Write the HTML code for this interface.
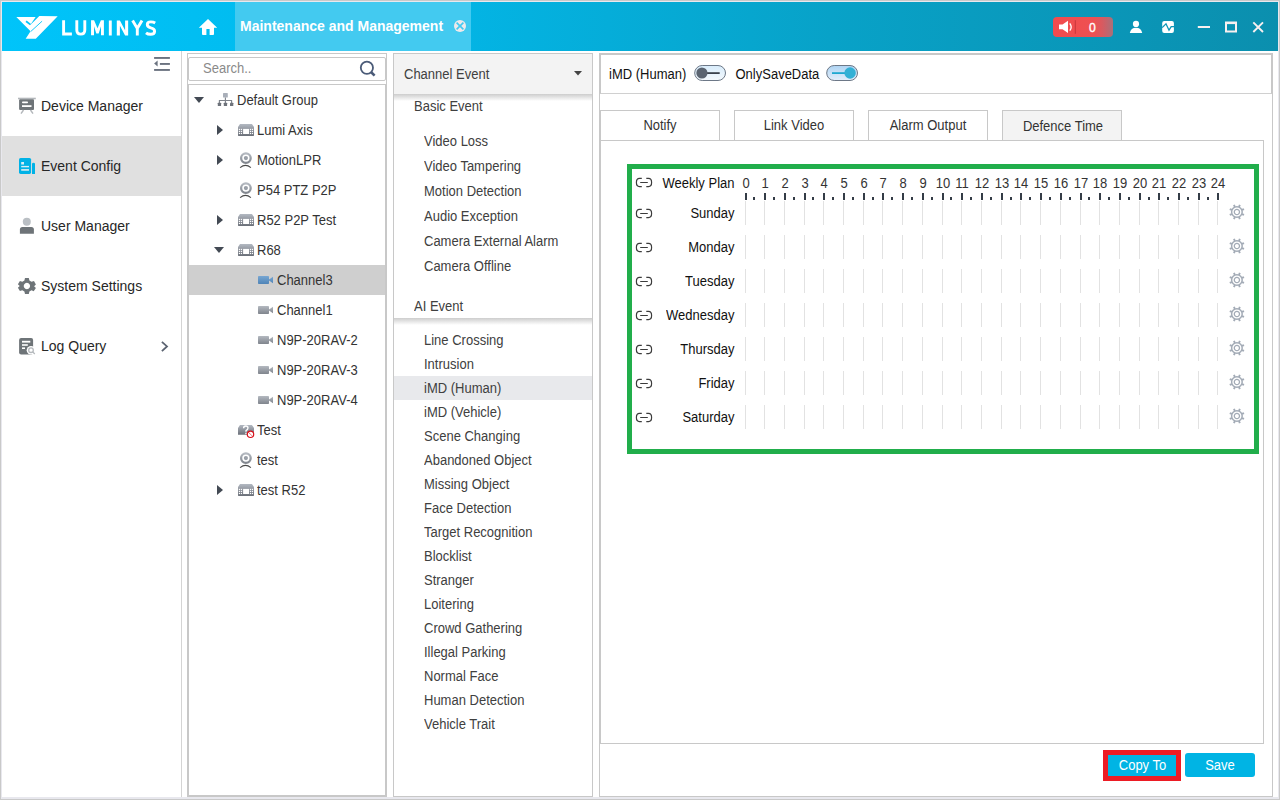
<!DOCTYPE html>
<html><head><meta charset="utf-8">
<style>
*{box-sizing:border-box;margin:0;padding:0}
html,body{width:1280px;height:800px;overflow:hidden;background:#c9c9c9}
body{position:relative;font-family:"Liberation Sans",sans-serif;color:#333;font-size:13px}
.a{position:absolute}
.t{position:absolute;white-space:nowrap;line-height:1;transform:scaleY(1.08);transform-origin:0 2.2px}
#f1{left:1px;top:1px;width:1278px;height:798px;background:#e8e8ee}
#f2{left:2px;top:2px;width:1276px;height:795px;background:#fff}
#hdr{left:2px;top:2px;width:1276px;height:49px;background:linear-gradient(to right,#00c4fa 0%,#02b8ea 30%,#08a2c8 65%,#0b8fae 100%)}
#tab{left:235px;top:2px;width:236px;height:49px;background:#43caf0}
.ttl{color:#fff;font-weight:bold;font-size:14px;transform:none}
#side{left:2px;top:51px;width:180px;height:746px;border-right:1px solid #d4d4d4;background:#fff}
.sitem{position:absolute;left:0;width:179px;height:60px}
.sitem .t{left:39px;top:23px;font-size:14px;color:#272727;transform:none}
.panel{position:absolute;top:53px;height:744px;border:1px solid #c8c8c8;background:#fff}
.tr .t{font-size:13px;color:#333}
.ev .t{font-size:13px;color:#333}
</style></head><body>
<div class="a" id="f1"></div>
<div class="a" id="f2"></div>
<div class="a" id="hdr"></div>
<div class="a" id="tab"></div>
<div class="t ttl" style="left:240px;top:19px">Maintenance and Management</div>
<svg class="a" style="left:0;top:0" width="480" height="51" viewBox="0 0 480 51">
  <polygon fill="#fff" points="16.3,16.88 35.63,16.88 30.3,25 39.34,16.1 57.7,16.3 35.8,38.76 25.67,38.76 30.55,31.34"/>
  <line x1="26.06" y1="21.18" x2="30.5" y2="24.6" stroke="#00c4fa" stroke-width="1.8"/>
  <line x1="42.08" y1="21.18" x2="30.75" y2="31.5" stroke="#00c4fa" stroke-width="0.9"/>
  <polygon fill="#fff" points="91.05,20.3 94.1,20.3 97.5,28.3 100.9,20.3 103.9,20.3 103.9,35.3 101,35.3 101,26.2 98.7,33.6 96.3,33.6 94,26.2 94,35.3 91.05,35.3"/>
  <polygon fill="#fff" points="116.8,20.4 119.9,20.4 125.1,30.2 125.1,20.4 128.15,20.4 128.15,35.6 125.1,35.6 119.9,25.8 119.9,35.6 116.8,35.6"/>
  <path fill="none" stroke="#fff" stroke-width="2.9" stroke-linejoin="miter" d="M63.6,20.3 V33.95 H71.9 M76.8,20.3 V30 Q76.8,34.1 80.8,34.1 Q84.8,34.1 84.8,30 V20.3 M110.3,20.4 V35.6 M132.6,20.4 L137.3,28.4 L142,20.4 M137.3,28 V35.6 M155.2,22.9 Q153.5,21.9 150.8,21.9 Q147.3,21.9 147.3,24.6 Q147.3,27.1 150.8,27.8 Q154.6,28.6 154.6,31.2 Q154.6,34.3 150.6,34.3 Q147.8,34.3 146,32.8"/>
  <path fill="#fff" d="M208,19 L217.2,27.8 L214,27.8 L214,34 Q214,34.9 213.1,34.9 L209.6,34.9 L209.6,29 L206.4,29 L206.4,34.9 L202.9,34.9 Q202,34.9 202,34 L202,27.8 L198.8,27.8 Z"/>
  <circle cx="460" cy="26" r="6" fill="#efe9eb"/>
  <path d="M456.6,22.6 L463.4,29.4 M463.4,22.6 L456.6,29.4" stroke="#43caf0" stroke-width="1.6"/>
</svg>
<div class="a" style="left:1053px;top:17px;width:60px;height:20px;border-radius:4px;background:linear-gradient(to right,#f24b4e 0%,#ee5052 68%,#d85a60 82%,#a8707a 100%)"></div>
<svg class="a" style="left:1040px;top:0" width="240" height="51" viewBox="1040 0 240 51">
  <path fill="#fff" d="M1059,24.5 L1062.5,24.5 L1068,20.8 L1068,33 L1062.5,29.3 L1059,29.3 Z"/>
  <path d="M1069.8,23.3 Q1072.6,27 1069.8,30.7" stroke="#fff" stroke-width="1.3" fill="none"/>
  <line x1="1075.3" y1="20.2" x2="1075.3" y2="33.8" stroke="#c8363a" stroke-width="1"/>
  <text x="1089.1" y="32" fill="#fff" font-family="Liberation Sans" font-size="12.2" stroke="#fff" stroke-width="0.35">0</text>
  <circle cx="1136" cy="23.9" r="3.1" fill="#fff"/>
  <path fill="#fff" d="M1129.8,33 Q1130.8,27.8 1136,27.8 Q1141.2,27.8 1142.2,33 Z"/>
  <rect x="1162.2" y="21" width="11.7" height="12" rx="2" fill="#fff"/>
  <polyline points="1162.2,27.6 1166,23.8 1169,30.2 1171.2,26.6 1174,26.6" fill="none" stroke="#0b97b8" stroke-width="1.3"/>
  <rect x="1197.8" y="26" width="12.2" height="2" fill="#f8f0f0"/>
  <path fill="none" stroke="#f8f0f0" stroke-width="2" d="M1226,23 L1236,23 L1236,31.4 L1226,31.4 Z"/>
  <rect x="1225" y="21.5" width="12" height="2.6" fill="#f8f0f0"/>
  <path d="M1253.3,22.3 L1263,32 M1263,22.3 L1253.3,32" stroke="#f8f0f0" stroke-width="1.9"/>
</svg>

<div class="a" id="side">
  <div class="sitem" style="top:25px"><div class="t">Device Manager</div></div>
  <div class="sitem" style="top:85px;background:#e0e0e0"><div class="t">Event Config</div></div>
  <div class="sitem" style="top:145px"><div class="t">User Manager</div></div>
  <div class="sitem" style="top:205px"><div class="t">System Settings</div></div>
  <div class="sitem" style="top:265px"><div class="t">Log Query</div></div>
</div>

<svg class="a" style="left:0;top:51px" width="182" height="320" viewBox="0 51 182 320">
  <rect x="154.1" y="57" width="15.8" height="1.9" fill="#6b7380"/>
  <rect x="159.9" y="63" width="10" height="1.9" fill="#6b7380"/>
  <rect x="154.1" y="69" width="15.8" height="1.9" fill="#6b7380"/>
  <polygon points="157.6,60.6 157.6,66.6 154.1,63.6" fill="#6b7380"/>
  <!-- device manager -->
  <rect x="18" y="97.7" width="17.8" height="1.6" fill="#b3b7bb"/>
  <rect x="19.1" y="99.3" width="14.9" height="10.6" rx="1" fill="#6e7478"/>
  <rect x="22" y="101.6" width="6" height="1.6" rx="0.8" fill="#fff"/>
  <rect x="22" y="105.2" width="9.5" height="1.8" fill="#fff"/>
  <path d="M23.5,110 L21,113.6 M30.5,110 L33,113.6" stroke="#b3b7bb" stroke-width="1.4"/>
  <!-- event config -->
  <rect x="19" y="157.9" width="12.1" height="16" rx="1.6" fill="#00b2e6"/>
  <path d="M32,174 L32,164 Q32,162.7 33.5,162.7 Q35,162.7 35,164 L35,174 Z" fill="#00b2e6"/>
  <rect x="21.2" y="162" width="2.8" height="2.5" fill="#d8eef5"/>
  <rect x="21.2" y="165.9" width="7.8" height="1.4" fill="#d8eef5"/>
  <rect x="21.2" y="169" width="7.8" height="1.8" fill="#c8e6ef"/>
  <!-- user manager -->
  <circle cx="26.8" cy="221.7" r="4" fill="#babfc4"/>
  <path d="M19.9,233.8 L19.9,229.5 Q19.9,227 22.4,227 L31.4,227 Q33.9,227 33.9,229.5 L33.9,233.8 Z" fill="#6e7478"/>
  <!-- settings gear -->
  <g transform="translate(26.9,286)" fill="#6e7478">
    <path fill-rule="evenodd" d="M-1.9,-8 L1.9,-8 L2.5,-5.4 L4.6,-4.2 L7.1,-5 L7.6,-4 L9,-1.6 L7.2,0.3 L7.2,-0.3 L7.2,0.3 L9,2 L7.3,4.6 L6.8,5.2 L4.6,4.2 L2.5,5.4 L1.9,8 L-1.9,8 L-2.5,5.4 L-4.6,4.2 L-7,5 L-9,1.8 L-7.2,0 L-9,-1.8 L-7,-5 L-4.6,-4.2 L-2.5,-5.4 Z M0,-3.2 A3.2,3.2 0 1,0 0.01,-3.2 Z"/>
  </g>
  <!-- log query -->
  <rect x="19.1" y="337.9" width="14" height="16.5" rx="2" fill="#6e7478"/>
  <rect x="22" y="340.8" width="8.3" height="1.8" fill="#fff"/>
  <rect x="22" y="344.2" width="5.8" height="1.6" fill="#fff"/>
  <rect x="22" y="347.4" width="3" height="1.6" fill="#fff"/>
  <circle cx="31" cy="350.2" r="4.3" fill="#fff"/>
  <circle cx="31" cy="350.2" r="2.3" fill="none" stroke="#b5b9bd" stroke-width="1.3"/>
  <line x1="32.6" y1="351.8" x2="34.8" y2="354" stroke="#b5b9bd" stroke-width="1.3"/>
  <polyline points="161.9,341.8 167,346.4 161.9,351.1" fill="none" stroke="#5b6371" stroke-width="1.8"/>
</svg>
<div class="panel" style="left:187px;width:200px">
  <div class="a" style="left:0;top:3px;width:198px;height:24px;border:1px solid #c8c8c8;border-radius:2px"></div>
  <div class="t" style="left:15px;top:6.8px;font-size:13px;color:#8a8a8a">Search..</div>
  <div class="a" style="left:0;top:30px;width:198px;height:712px;border:1px solid #c8c8c8"></div>
  <div class="a" style="left:1px;top:211px;width:196px;height:30px;background:#cfcfcf"></div>
</div>
<svg class="a" style="left:187px;top:53px" width="200" height="460" viewBox="187 53 200 460">
  <defs>
    <linearGradient id="gg" x1="0" y1="0" x2="0" y2="1"><stop offset="0" stop-color="#b4b9c0"/><stop offset="1" stop-color="#80858d"/></linearGradient>
    <linearGradient id="gd" x1="0" y1="0" x2="0" y2="1"><stop offset="0" stop-color="#b3b9c2"/><stop offset="0.35" stop-color="#9a9fa8"/><stop offset="1" stop-color="#6b7079"/></linearGradient>
    <linearGradient id="gb" x1="0" y1="0" x2="0" y2="1"><stop offset="0" stop-color="#77a6d2"/><stop offset="1" stop-color="#4f84b7"/></linearGradient>
  </defs>
  <circle cx="366.9" cy="67.8" r="6.1" fill="none" stroke="#4b5b78" stroke-width="1.8"/>
  <line x1="371" y1="72" x2="374.6" y2="75.6" stroke="#4b5b78" stroke-width="2.6"/>
  <polygon points="194,97 204,97 199,103" fill="#434a54"/>
  <rect x="223" y="93" width="4.8" height="4.6" rx="0.6" fill="#a9afb9"/>
  <path d="M225.4,97.5 V103 M219.4,103 V100.5 H231.6 V103" stroke="#7d828a" stroke-width="1.1" fill="none"/>
  <rect x="217.8" y="102.8" width="3.3" height="3.3" rx="0.4" fill="#6e737b"/>
  <rect x="223.8" y="102.8" width="3.3" height="3.3" rx="0.4" fill="#6e737b"/>
  <rect x="230" y="102.8" width="3.3" height="3.3" rx="0.4" fill="#6e737b"/>
<polygon points="217,125 223,130 217,135" fill="#434a54"/>
  <path d="M240.0,124.0 L251.9,124.0 L254.0,127.0 L254.0,135.3 Q254.0,135.9 253.4,135.9 L238.6,135.9 Q238.0,135.9 238.0,135.3 L238.0,127.0 Z" fill="url(#gd)"/>
  <rect x="243.1" y="128.9" width="5.9" height="5.1" fill="#fff"/>
  <g fill="#fff"><rect x="238.85" y="128.85" width="1.2" height="1.2"/><rect x="238.85" y="130.85" width="1.2" height="1.2"/><rect x="238.85" y="132.90" width="1.2" height="1.2"/><rect x="240.85" y="128.85" width="1.2" height="1.2"/><rect x="240.85" y="130.85" width="1.2" height="1.2"/><rect x="240.85" y="132.90" width="1.2" height="1.2"/><rect x="249.85" y="128.85" width="1.2" height="1.2"/><rect x="249.85" y="130.85" width="1.2" height="1.2"/><rect x="249.85" y="132.90" width="1.2" height="1.2"/><rect x="251.85" y="128.85" width="1.2" height="1.2"/><rect x="251.85" y="130.85" width="1.2" height="1.2"/><rect x="251.85" y="132.90" width="1.2" height="1.2"/></g>
  <polygon points="217,155 223,160 217,165" fill="#434a54"/>
  <circle cx="245.9" cy="158.1" r="4.8" fill="none" stroke="url(#gg)" stroke-width="2.3"/>
  <circle cx="245.9" cy="158.1" r="2.1" fill="#9aa0a8"/>
  <path d="M240.1,167.6 Q245.5,163.2 250.9,167.6" fill="none" stroke="#4a4a4a" stroke-width="1.1"/>
  <circle cx="245.9" cy="188.1" r="4.8" fill="none" stroke="url(#gg)" stroke-width="2.3"/>
  <circle cx="245.9" cy="188.1" r="2.1" fill="#9aa0a8"/>
  <path d="M240.1,197.6 Q245.5,193.2 250.9,197.6" fill="none" stroke="#4a4a4a" stroke-width="1.1"/>
  <polygon points="217,215 223,220 217,225" fill="#434a54"/>
  <path d="M240.0,214.0 L251.9,214.0 L254.0,217.0 L254.0,225.3 Q254.0,225.9 253.4,225.9 L238.6,225.9 Q238.0,225.9 238.0,225.3 L238.0,217.0 Z" fill="url(#gd)"/>
  <rect x="243.1" y="218.9" width="5.9" height="5.1" fill="#fff"/>
  <g fill="#fff"><rect x="238.85" y="218.85" width="1.2" height="1.2"/><rect x="238.85" y="220.85" width="1.2" height="1.2"/><rect x="238.85" y="222.90" width="1.2" height="1.2"/><rect x="240.85" y="218.85" width="1.2" height="1.2"/><rect x="240.85" y="220.85" width="1.2" height="1.2"/><rect x="240.85" y="222.90" width="1.2" height="1.2"/><rect x="249.85" y="218.85" width="1.2" height="1.2"/><rect x="249.85" y="220.85" width="1.2" height="1.2"/><rect x="249.85" y="222.90" width="1.2" height="1.2"/><rect x="251.85" y="218.85" width="1.2" height="1.2"/><rect x="251.85" y="220.85" width="1.2" height="1.2"/><rect x="251.85" y="222.90" width="1.2" height="1.2"/></g>
  <polygon points="214,247 224,247 219,253" fill="#434a54"/>
  <path d="M240.0,244.0 L251.9,244.0 L254.0,247.0 L254.0,255.3 Q254.0,255.9 253.4,255.9 L238.6,255.9 Q238.0,255.9 238.0,255.3 L238.0,247.0 Z" fill="url(#gd)"/>
  <rect x="243.1" y="248.9" width="5.9" height="5.1" fill="#fff"/>
  <g fill="#fff"><rect x="238.85" y="248.85" width="1.2" height="1.2"/><rect x="238.85" y="250.85" width="1.2" height="1.2"/><rect x="238.85" y="252.90" width="1.2" height="1.2"/><rect x="240.85" y="248.85" width="1.2" height="1.2"/><rect x="240.85" y="250.85" width="1.2" height="1.2"/><rect x="240.85" y="252.90" width="1.2" height="1.2"/><rect x="249.85" y="248.85" width="1.2" height="1.2"/><rect x="249.85" y="250.85" width="1.2" height="1.2"/><rect x="249.85" y="252.90" width="1.2" height="1.2"/><rect x="251.85" y="248.85" width="1.2" height="1.2"/><rect x="251.85" y="250.85" width="1.2" height="1.2"/><rect x="251.85" y="252.90" width="1.2" height="1.2"/></g>
  <rect x="258" y="276" width="11" height="8" rx="0.8" fill="url(#gb)"/>
  <polygon points="269,279.4 273,276.7 273,283.3 269,280.6" fill="url(#gb)"/>
  <rect x="258" y="306" width="11" height="8" rx="0.8" fill="url(#gg)"/>
  <polygon points="269,309.4 273,306.7 273,313.3 269,310.6" fill="url(#gg)"/>
  <rect x="258" y="336" width="11" height="8" rx="0.8" fill="url(#gg)"/>
  <polygon points="269,339.4 273,336.7 273,343.3 269,340.6" fill="url(#gg)"/>
  <rect x="258" y="366" width="11" height="8" rx="0.8" fill="url(#gg)"/>
  <polygon points="269,369.4 273,366.7 273,373.3 269,370.6" fill="url(#gg)"/>
  <rect x="258" y="396" width="11" height="8" rx="0.8" fill="url(#gg)"/>
  <polygon points="269,399.4 273,396.7 273,403.3 269,400.6" fill="url(#gg)"/>
  <path d="M240,425 L251.9,425 L254,428 L254,434.8 L238,434.8 L238,428 Z" fill="url(#gd)"/>
  <path d="M243.6,428.2 Q243.6,426 245.8,426 Q248,426 248,427.9 Q248,429.3 246,430.6 L246,431.8" fill="none" stroke="#fff" stroke-width="1.3"/>
  <rect x="245.3" y="432.7" width="1.4" height="1.4" fill="#fff"/>
  <circle cx="250.5" cy="434.3" r="3.2" fill="#fff" stroke="#d9101a" stroke-width="1.2"/>
  <line x1="248.3" y1="432.1" x2="252.7" y2="436.5" stroke="#d9101a" stroke-width="0.9" stroke-dasharray="1 0.6"/>
  <circle cx="245.9" cy="458.1" r="4.8" fill="none" stroke="url(#gg)" stroke-width="2.3"/>
  <circle cx="245.9" cy="458.1" r="2.1" fill="#9aa0a8"/>
  <path d="M240.1,467.6 Q245.5,463.2 250.9,467.6" fill="none" stroke="#4a4a4a" stroke-width="1.1"/>
  <polygon points="217,485 223,490 217,495" fill="#434a54"/>
  <path d="M240.0,484.0 L251.9,484.0 L254.0,487.0 L254.0,495.3 Q254.0,495.9 253.4,495.9 L238.6,495.9 Q238.0,495.9 238.0,495.3 L238.0,487.0 Z" fill="url(#gd)"/>
  <rect x="243.1" y="488.9" width="5.9" height="5.1" fill="#fff"/>
  <g fill="#fff"><rect x="238.85" y="488.85" width="1.2" height="1.2"/><rect x="238.85" y="490.85" width="1.2" height="1.2"/><rect x="238.85" y="492.90" width="1.2" height="1.2"/><rect x="240.85" y="488.85" width="1.2" height="1.2"/><rect x="240.85" y="490.85" width="1.2" height="1.2"/><rect x="240.85" y="492.90" width="1.2" height="1.2"/><rect x="249.85" y="488.85" width="1.2" height="1.2"/><rect x="249.85" y="490.85" width="1.2" height="1.2"/><rect x="249.85" y="492.90" width="1.2" height="1.2"/><rect x="251.85" y="488.85" width="1.2" height="1.2"/><rect x="251.85" y="490.85" width="1.2" height="1.2"/><rect x="251.85" y="492.90" width="1.2" height="1.2"/></g>
</svg>
<div class="t tr" style="left:237px;top:93px;font-size:13px">Default Group</div>
<div class="t tr" style="left:257px;top:123px;font-size:13px">Lumi Axis</div>
<div class="t tr" style="left:257px;top:153px;font-size:13px">MotionLPR</div>
<div class="t tr" style="left:257px;top:183px;font-size:13px">P54 PTZ P2P</div>
<div class="t tr" style="left:257px;top:213px;font-size:13px">R52 P2P Test</div>
<div class="t tr" style="left:257px;top:243px;font-size:13px">R68</div>
<div class="t tr" style="left:277px;top:273px;font-size:13px">Channel3</div>
<div class="t tr" style="left:277px;top:303px;font-size:13px">Channel1</div>
<div class="t tr" style="left:277px;top:333px;font-size:13px">N9P-20RAV-2</div>
<div class="t tr" style="left:277px;top:363px;font-size:13px">N9P-20RAV-3</div>
<div class="t tr" style="left:277px;top:393px;font-size:13px">N9P-20RAV-4</div>
<div class="t tr" style="left:257px;top:423px;font-size:13px">Test</div>
<div class="t tr" style="left:257px;top:453px;font-size:13px">test</div>
<div class="t tr" style="left:257px;top:483px;font-size:13px">test R52</div>

<div class="panel" style="left:393px;width:200px">
  <div class="a" style="left:0;top:0;width:198px;height:40px;background:#f3f3f3"></div>
  <div class="a" style="left:0;top:40px;width:198px;height:7px;background:linear-gradient(#cdcdcd,rgba(255,255,255,0))"></div>
  <div class="a" style="left:0;top:264px;width:198px;height:7px;background:linear-gradient(#cdcdcd,rgba(255,255,255,0))"></div>
  <div class="a" style="left:0;top:322px;width:198px;height:24px;background:#e8e9ec"></div>
</div>
<svg class="a" style="left:574px;top:71px" width="8" height="5" viewBox="0 0 8 5"><polygon points="0,0 8,0 4,4.6" fill="#444"/></svg>
<div class="t" style="left:404px;top:66.5px;color:#404040">Channel Event</div>
<div class="t" style="left:414px;top:98.7px;color:#404040">Basic Event</div>
<div class="t" style="left:414px;top:299px;color:#404040">AI Event</div>
<div class="t" style="left:424px;top:133.7px;color:#404040">Video Loss</div>
<div class="t" style="left:424px;top:158.7px;color:#404040">Video Tampering</div>
<div class="t" style="left:424px;top:183.7px;color:#404040">Motion Detection</div>
<div class="t" style="left:424px;top:208.7px;color:#404040">Audio Exception</div>
<div class="t" style="left:424px;top:233.7px;color:#404040">Camera External Alarm</div>
<div class="t" style="left:424px;top:258.7px;color:#404040">Camera Offline</div>
<div class="t" style="left:424px;top:332.7px;color:#404040">Line Crossing</div>
<div class="t" style="left:424px;top:356.7px;color:#404040">Intrusion</div>
<div class="t" style="left:424px;top:380.7px;color:#404040">iMD (Human)</div>
<div class="t" style="left:424px;top:404.7px;color:#404040">iMD (Vehicle)</div>
<div class="t" style="left:424px;top:428.7px;color:#404040">Scene Changing</div>
<div class="t" style="left:424px;top:452.7px;color:#404040">Abandoned Object</div>
<div class="t" style="left:424px;top:476.7px;color:#404040">Missing Object</div>
<div class="t" style="left:424px;top:500.7px;color:#404040">Face Detection</div>
<div class="t" style="left:424px;top:524.7px;color:#404040">Target Recognition</div>
<div class="t" style="left:424px;top:548.7px;color:#404040">Blocklist</div>
<div class="t" style="left:424px;top:572.7px;color:#404040">Stranger</div>
<div class="t" style="left:424px;top:596.7px;color:#404040">Loitering</div>
<div class="t" style="left:424px;top:620.7px;color:#404040">Crowd Gathering</div>
<div class="t" style="left:424px;top:644.7px;color:#404040">Illegal Parking</div>
<div class="t" style="left:424px;top:668.7px;color:#404040">Normal Face</div>
<div class="t" style="left:424px;top:692.7px;color:#404040">Human Detection</div>
<div class="t" style="left:424px;top:716.7px;color:#404040">Vehicle Trait</div>

<div class="panel" style="left:599px;width:674px"></div>
<div class="a" style="left:600px;top:54px;width:672px;height:40px;border:1px solid #c8c8c8;border-bottom-color:#d0d0d0"></div>
<div class="t" style="left:609px;top:67px;color:#111">iMD (Human)</div>
<div class="t" style="left:735.5px;top:67px;color:#111">OnlySaveData</div>
<svg class="a" style="left:690px;top:60px" width="175" height="26" viewBox="690 60 175 26">
  <defs>
    <linearGradient id="tg1" x1="0" y1="0" x2="0" y2="1"><stop offset="0" stop-color="#d8ecfb"/><stop offset="1" stop-color="#f4f9fd"/></linearGradient>
    <linearGradient id="tg2" x1="0" y1="0" x2="0" y2="1"><stop offset="0" stop-color="#aed4f3"/><stop offset="1" stop-color="#e4eefa"/></linearGradient>
  </defs>
  <rect x="694.7" y="65.5" width="30.8" height="15" rx="7.5" fill="url(#tg1)" stroke="#6d7887" stroke-width="1"/>
  <line x1="703" y1="73.1" x2="719.7" y2="73.1" stroke="#3a414c" stroke-width="1.8"/>
  <circle cx="701.9" cy="73" r="5.6" fill="#5b6471"/>
  <rect x="826.7" y="65.5" width="30.8" height="15" rx="7.5" fill="url(#tg2)" stroke="#6d7887" stroke-width="1"/>
  <line x1="832" y1="73.1" x2="849" y2="73.1" stroke="#1ea8d0" stroke-width="1.8"/>
  <circle cx="850.1" cy="73" r="5.7" fill="#33b0d5"/>
</svg>
<div class="a" style="left:600px;top:140px;width:664px;height:604px;border:1px solid #c8c8c8"></div>
<div class="a" style="left:600px;top:110px;width:120px;height:31px;border:1px solid #c8c8c8;background:#fff"></div>
<div class="a" style="left:734px;top:110px;width:120px;height:31px;border:1px solid #c8c8c8;background:#fff"></div>
<div class="a" style="left:868px;top:110px;width:120px;height:31px;border:1px solid #c8c8c8;background:#fff"></div>
<div class="a" style="left:1002px;top:110px;width:120px;height:31px;border:1px solid #c8c8c8;background:#f3f3f3"></div>
<div class="t" style="left:600px;top:118px;width:120px;text-align:center">Notify</div>
<div class="t" style="left:734px;top:118px;width:120px;text-align:center">Link Video</div>
<div class="t" style="left:868px;top:118px;width:120px;text-align:center">Alarm Output</div>
<div class="t" style="left:1002px;top:119.3px;width:120px;text-align:center;left:1003px">Defence Time</div>
<div class="a" style="left:627px;top:164px;width:632px;height:290px;border:5px solid #21ae4b"></div>
<svg class="a" style="left:630px;top:170px" width="625" height="280" viewBox="630 170 625 280">
<path d="M641.8,178.45 H639.5 Q636.4,178.45 636.4,182.5 Q636.4,186.55 639.5,186.55 H641.8 M646.3,178.45 H648.5 Q651.6,178.45 651.6,182.5 Q651.6,186.55 648.5,186.55 H646.3 M640.2,182.5 H647.8" fill="none" stroke="#3c3c3c" stroke-width="1.2"/>
<rect x="745" y="193" width="2" height="7" fill="#343c46"/>
<rect x="753" y="197" width="2" height="3" fill="#343c46"/>
<rect x="764" y="193" width="2" height="7" fill="#343c46"/>
<rect x="773" y="197" width="2" height="3" fill="#343c46"/>
<rect x="784" y="193" width="2" height="7" fill="#343c46"/>
<rect x="793" y="197" width="2" height="3" fill="#343c46"/>
<rect x="804" y="193" width="2" height="7" fill="#343c46"/>
<rect x="812" y="197" width="2" height="3" fill="#343c46"/>
<rect x="823" y="193" width="2" height="7" fill="#343c46"/>
<rect x="832" y="197" width="2" height="3" fill="#343c46"/>
<rect x="843" y="193" width="2" height="7" fill="#343c46"/>
<rect x="852" y="197" width="2" height="3" fill="#343c46"/>
<rect x="863" y="193" width="2" height="7" fill="#343c46"/>
<rect x="872" y="197" width="2" height="3" fill="#343c46"/>
<rect x="882" y="193" width="2" height="7" fill="#343c46"/>
<rect x="891" y="197" width="2" height="3" fill="#343c46"/>
<rect x="902" y="193" width="2" height="7" fill="#343c46"/>
<rect x="911" y="197" width="2" height="3" fill="#343c46"/>
<rect x="922" y="193" width="2" height="7" fill="#343c46"/>
<rect x="931" y="197" width="2" height="3" fill="#343c46"/>
<rect x="942" y="193" width="2" height="7" fill="#343c46"/>
<rect x="950" y="197" width="2" height="3" fill="#343c46"/>
<rect x="961" y="193" width="2" height="7" fill="#343c46"/>
<rect x="970" y="197" width="2" height="3" fill="#343c46"/>
<rect x="981" y="193" width="2" height="7" fill="#343c46"/>
<rect x="990" y="197" width="2" height="3" fill="#343c46"/>
<rect x="1001" y="193" width="2" height="7" fill="#343c46"/>
<rect x="1010" y="197" width="2" height="3" fill="#343c46"/>
<rect x="1020" y="193" width="2" height="7" fill="#343c46"/>
<rect x="1029" y="197" width="2" height="3" fill="#343c46"/>
<rect x="1040" y="193" width="2" height="7" fill="#343c46"/>
<rect x="1049" y="197" width="2" height="3" fill="#343c46"/>
<rect x="1060" y="193" width="2" height="7" fill="#343c46"/>
<rect x="1069" y="197" width="2" height="3" fill="#343c46"/>
<rect x="1080" y="193" width="2" height="7" fill="#343c46"/>
<rect x="1088" y="197" width="2" height="3" fill="#343c46"/>
<rect x="1099" y="193" width="2" height="7" fill="#343c46"/>
<rect x="1108" y="197" width="2" height="3" fill="#343c46"/>
<rect x="1119" y="193" width="2" height="7" fill="#343c46"/>
<rect x="1128" y="197" width="2" height="3" fill="#343c46"/>
<rect x="1139" y="193" width="2" height="7" fill="#343c46"/>
<rect x="1148" y="197" width="2" height="3" fill="#343c46"/>
<rect x="1158" y="193" width="2" height="7" fill="#343c46"/>
<rect x="1167" y="197" width="2" height="3" fill="#343c46"/>
<rect x="1178" y="193" width="2" height="7" fill="#343c46"/>
<rect x="1187" y="197" width="2" height="3" fill="#343c46"/>
<rect x="1198" y="193" width="2" height="7" fill="#343c46"/>
<rect x="1207" y="197" width="2" height="3" fill="#343c46"/>
<rect x="1217" y="193" width="2" height="7" fill="#343c46"/>
<path d="M641.8,209.45 H639.5 Q636.4,209.45 636.4,213.5 Q636.4,217.55 639.5,217.55 H641.8 M646.3,209.45 H648.5 Q651.6,209.45 651.6,213.5 Q651.6,217.55 648.5,217.55 H646.3 M640.2,213.5 H647.8" fill="none" stroke="#3c3c3c" stroke-width="1.2"/>
<rect x="745" y="201.0" width="1" height="24" fill="#e2e2e2"/>
<rect x="764" y="201.0" width="1" height="24" fill="#e2e2e2"/>
<rect x="784" y="201.0" width="1" height="24" fill="#e2e2e2"/>
<rect x="804" y="201.0" width="1" height="24" fill="#e2e2e2"/>
<rect x="823" y="201.0" width="1" height="24" fill="#e2e2e2"/>
<rect x="843" y="201.0" width="1" height="24" fill="#e2e2e2"/>
<rect x="863" y="201.0" width="1" height="24" fill="#e2e2e2"/>
<rect x="882" y="201.0" width="1" height="24" fill="#e2e2e2"/>
<rect x="902" y="201.0" width="1" height="24" fill="#e2e2e2"/>
<rect x="922" y="201.0" width="1" height="24" fill="#e2e2e2"/>
<rect x="942" y="201.0" width="1" height="24" fill="#e2e2e2"/>
<rect x="961" y="201.0" width="1" height="24" fill="#e2e2e2"/>
<rect x="981" y="201.0" width="1" height="24" fill="#e2e2e2"/>
<rect x="1001" y="201.0" width="1" height="24" fill="#e2e2e2"/>
<rect x="1020" y="201.0" width="1" height="24" fill="#e2e2e2"/>
<rect x="1040" y="201.0" width="1" height="24" fill="#e2e2e2"/>
<rect x="1060" y="201.0" width="1" height="24" fill="#e2e2e2"/>
<rect x="1080" y="201.0" width="1" height="24" fill="#e2e2e2"/>
<rect x="1099" y="201.0" width="1" height="24" fill="#e2e2e2"/>
<rect x="1119" y="201.0" width="1" height="24" fill="#e2e2e2"/>
<rect x="1139" y="201.0" width="1" height="24" fill="#e2e2e2"/>
<rect x="1158" y="201.0" width="1" height="24" fill="#e2e2e2"/>
<rect x="1178" y="201.0" width="1" height="24" fill="#e2e2e2"/>
<rect x="1198" y="201.0" width="1" height="24" fill="#e2e2e2"/>
<rect x="1217" y="201.0" width="1" height="24" fill="#e2e2e2"/>
<g transform="translate(1236.9,212.0)" fill="none" stroke="#a3abb6"><circle r="5.3" stroke-width="1.5"/><circle r="2.6" stroke-width="1.3"/><g stroke-width="1.9"><line x1="0" y1="-5.4" x2="0" y2="-7.7" transform="rotate(22.5)"/><line x1="0" y1="-5.4" x2="0" y2="-7.7" transform="rotate(67.5)"/><line x1="0" y1="-5.4" x2="0" y2="-7.7" transform="rotate(112.5)"/><line x1="0" y1="-5.4" x2="0" y2="-7.7" transform="rotate(157.5)"/><line x1="0" y1="-5.4" x2="0" y2="-7.7" transform="rotate(202.5)"/><line x1="0" y1="-5.4" x2="0" y2="-7.7" transform="rotate(247.5)"/><line x1="0" y1="-5.4" x2="0" y2="-7.7" transform="rotate(292.5)"/><line x1="0" y1="-5.4" x2="0" y2="-7.7" transform="rotate(337.5)"/></g></g>
<path d="M641.8,243.45 H639.5 Q636.4,243.45 636.4,247.5 Q636.4,251.55 639.5,251.55 H641.8 M646.3,243.45 H648.5 Q651.6,243.45 651.6,247.5 Q651.6,251.55 648.5,251.55 H646.3 M640.2,247.5 H647.8" fill="none" stroke="#3c3c3c" stroke-width="1.2"/>
<rect x="745" y="235.0" width="1" height="24" fill="#e2e2e2"/>
<rect x="764" y="235.0" width="1" height="24" fill="#e2e2e2"/>
<rect x="784" y="235.0" width="1" height="24" fill="#e2e2e2"/>
<rect x="804" y="235.0" width="1" height="24" fill="#e2e2e2"/>
<rect x="823" y="235.0" width="1" height="24" fill="#e2e2e2"/>
<rect x="843" y="235.0" width="1" height="24" fill="#e2e2e2"/>
<rect x="863" y="235.0" width="1" height="24" fill="#e2e2e2"/>
<rect x="882" y="235.0" width="1" height="24" fill="#e2e2e2"/>
<rect x="902" y="235.0" width="1" height="24" fill="#e2e2e2"/>
<rect x="922" y="235.0" width="1" height="24" fill="#e2e2e2"/>
<rect x="942" y="235.0" width="1" height="24" fill="#e2e2e2"/>
<rect x="961" y="235.0" width="1" height="24" fill="#e2e2e2"/>
<rect x="981" y="235.0" width="1" height="24" fill="#e2e2e2"/>
<rect x="1001" y="235.0" width="1" height="24" fill="#e2e2e2"/>
<rect x="1020" y="235.0" width="1" height="24" fill="#e2e2e2"/>
<rect x="1040" y="235.0" width="1" height="24" fill="#e2e2e2"/>
<rect x="1060" y="235.0" width="1" height="24" fill="#e2e2e2"/>
<rect x="1080" y="235.0" width="1" height="24" fill="#e2e2e2"/>
<rect x="1099" y="235.0" width="1" height="24" fill="#e2e2e2"/>
<rect x="1119" y="235.0" width="1" height="24" fill="#e2e2e2"/>
<rect x="1139" y="235.0" width="1" height="24" fill="#e2e2e2"/>
<rect x="1158" y="235.0" width="1" height="24" fill="#e2e2e2"/>
<rect x="1178" y="235.0" width="1" height="24" fill="#e2e2e2"/>
<rect x="1198" y="235.0" width="1" height="24" fill="#e2e2e2"/>
<rect x="1217" y="235.0" width="1" height="24" fill="#e2e2e2"/>
<g transform="translate(1236.9,246.0)" fill="none" stroke="#a3abb6"><circle r="5.3" stroke-width="1.5"/><circle r="2.6" stroke-width="1.3"/><g stroke-width="1.9"><line x1="0" y1="-5.4" x2="0" y2="-7.7" transform="rotate(22.5)"/><line x1="0" y1="-5.4" x2="0" y2="-7.7" transform="rotate(67.5)"/><line x1="0" y1="-5.4" x2="0" y2="-7.7" transform="rotate(112.5)"/><line x1="0" y1="-5.4" x2="0" y2="-7.7" transform="rotate(157.5)"/><line x1="0" y1="-5.4" x2="0" y2="-7.7" transform="rotate(202.5)"/><line x1="0" y1="-5.4" x2="0" y2="-7.7" transform="rotate(247.5)"/><line x1="0" y1="-5.4" x2="0" y2="-7.7" transform="rotate(292.5)"/><line x1="0" y1="-5.4" x2="0" y2="-7.7" transform="rotate(337.5)"/></g></g>
<path d="M641.8,277.45 H639.5 Q636.4,277.45 636.4,281.5 Q636.4,285.55 639.5,285.55 H641.8 M646.3,277.45 H648.5 Q651.6,277.45 651.6,281.5 Q651.6,285.55 648.5,285.55 H646.3 M640.2,281.5 H647.8" fill="none" stroke="#3c3c3c" stroke-width="1.2"/>
<rect x="745" y="269.0" width="1" height="24" fill="#e2e2e2"/>
<rect x="764" y="269.0" width="1" height="24" fill="#e2e2e2"/>
<rect x="784" y="269.0" width="1" height="24" fill="#e2e2e2"/>
<rect x="804" y="269.0" width="1" height="24" fill="#e2e2e2"/>
<rect x="823" y="269.0" width="1" height="24" fill="#e2e2e2"/>
<rect x="843" y="269.0" width="1" height="24" fill="#e2e2e2"/>
<rect x="863" y="269.0" width="1" height="24" fill="#e2e2e2"/>
<rect x="882" y="269.0" width="1" height="24" fill="#e2e2e2"/>
<rect x="902" y="269.0" width="1" height="24" fill="#e2e2e2"/>
<rect x="922" y="269.0" width="1" height="24" fill="#e2e2e2"/>
<rect x="942" y="269.0" width="1" height="24" fill="#e2e2e2"/>
<rect x="961" y="269.0" width="1" height="24" fill="#e2e2e2"/>
<rect x="981" y="269.0" width="1" height="24" fill="#e2e2e2"/>
<rect x="1001" y="269.0" width="1" height="24" fill="#e2e2e2"/>
<rect x="1020" y="269.0" width="1" height="24" fill="#e2e2e2"/>
<rect x="1040" y="269.0" width="1" height="24" fill="#e2e2e2"/>
<rect x="1060" y="269.0" width="1" height="24" fill="#e2e2e2"/>
<rect x="1080" y="269.0" width="1" height="24" fill="#e2e2e2"/>
<rect x="1099" y="269.0" width="1" height="24" fill="#e2e2e2"/>
<rect x="1119" y="269.0" width="1" height="24" fill="#e2e2e2"/>
<rect x="1139" y="269.0" width="1" height="24" fill="#e2e2e2"/>
<rect x="1158" y="269.0" width="1" height="24" fill="#e2e2e2"/>
<rect x="1178" y="269.0" width="1" height="24" fill="#e2e2e2"/>
<rect x="1198" y="269.0" width="1" height="24" fill="#e2e2e2"/>
<rect x="1217" y="269.0" width="1" height="24" fill="#e2e2e2"/>
<g transform="translate(1236.9,280.0)" fill="none" stroke="#a3abb6"><circle r="5.3" stroke-width="1.5"/><circle r="2.6" stroke-width="1.3"/><g stroke-width="1.9"><line x1="0" y1="-5.4" x2="0" y2="-7.7" transform="rotate(22.5)"/><line x1="0" y1="-5.4" x2="0" y2="-7.7" transform="rotate(67.5)"/><line x1="0" y1="-5.4" x2="0" y2="-7.7" transform="rotate(112.5)"/><line x1="0" y1="-5.4" x2="0" y2="-7.7" transform="rotate(157.5)"/><line x1="0" y1="-5.4" x2="0" y2="-7.7" transform="rotate(202.5)"/><line x1="0" y1="-5.4" x2="0" y2="-7.7" transform="rotate(247.5)"/><line x1="0" y1="-5.4" x2="0" y2="-7.7" transform="rotate(292.5)"/><line x1="0" y1="-5.4" x2="0" y2="-7.7" transform="rotate(337.5)"/></g></g>
<path d="M641.8,311.45 H639.5 Q636.4,311.45 636.4,315.5 Q636.4,319.55 639.5,319.55 H641.8 M646.3,311.45 H648.5 Q651.6,311.45 651.6,315.5 Q651.6,319.55 648.5,319.55 H646.3 M640.2,315.5 H647.8" fill="none" stroke="#3c3c3c" stroke-width="1.2"/>
<rect x="745" y="303.0" width="1" height="24" fill="#e2e2e2"/>
<rect x="764" y="303.0" width="1" height="24" fill="#e2e2e2"/>
<rect x="784" y="303.0" width="1" height="24" fill="#e2e2e2"/>
<rect x="804" y="303.0" width="1" height="24" fill="#e2e2e2"/>
<rect x="823" y="303.0" width="1" height="24" fill="#e2e2e2"/>
<rect x="843" y="303.0" width="1" height="24" fill="#e2e2e2"/>
<rect x="863" y="303.0" width="1" height="24" fill="#e2e2e2"/>
<rect x="882" y="303.0" width="1" height="24" fill="#e2e2e2"/>
<rect x="902" y="303.0" width="1" height="24" fill="#e2e2e2"/>
<rect x="922" y="303.0" width="1" height="24" fill="#e2e2e2"/>
<rect x="942" y="303.0" width="1" height="24" fill="#e2e2e2"/>
<rect x="961" y="303.0" width="1" height="24" fill="#e2e2e2"/>
<rect x="981" y="303.0" width="1" height="24" fill="#e2e2e2"/>
<rect x="1001" y="303.0" width="1" height="24" fill="#e2e2e2"/>
<rect x="1020" y="303.0" width="1" height="24" fill="#e2e2e2"/>
<rect x="1040" y="303.0" width="1" height="24" fill="#e2e2e2"/>
<rect x="1060" y="303.0" width="1" height="24" fill="#e2e2e2"/>
<rect x="1080" y="303.0" width="1" height="24" fill="#e2e2e2"/>
<rect x="1099" y="303.0" width="1" height="24" fill="#e2e2e2"/>
<rect x="1119" y="303.0" width="1" height="24" fill="#e2e2e2"/>
<rect x="1139" y="303.0" width="1" height="24" fill="#e2e2e2"/>
<rect x="1158" y="303.0" width="1" height="24" fill="#e2e2e2"/>
<rect x="1178" y="303.0" width="1" height="24" fill="#e2e2e2"/>
<rect x="1198" y="303.0" width="1" height="24" fill="#e2e2e2"/>
<rect x="1217" y="303.0" width="1" height="24" fill="#e2e2e2"/>
<g transform="translate(1236.9,314.0)" fill="none" stroke="#a3abb6"><circle r="5.3" stroke-width="1.5"/><circle r="2.6" stroke-width="1.3"/><g stroke-width="1.9"><line x1="0" y1="-5.4" x2="0" y2="-7.7" transform="rotate(22.5)"/><line x1="0" y1="-5.4" x2="0" y2="-7.7" transform="rotate(67.5)"/><line x1="0" y1="-5.4" x2="0" y2="-7.7" transform="rotate(112.5)"/><line x1="0" y1="-5.4" x2="0" y2="-7.7" transform="rotate(157.5)"/><line x1="0" y1="-5.4" x2="0" y2="-7.7" transform="rotate(202.5)"/><line x1="0" y1="-5.4" x2="0" y2="-7.7" transform="rotate(247.5)"/><line x1="0" y1="-5.4" x2="0" y2="-7.7" transform="rotate(292.5)"/><line x1="0" y1="-5.4" x2="0" y2="-7.7" transform="rotate(337.5)"/></g></g>
<path d="M641.8,345.45 H639.5 Q636.4,345.45 636.4,349.5 Q636.4,353.55 639.5,353.55 H641.8 M646.3,345.45 H648.5 Q651.6,345.45 651.6,349.5 Q651.6,353.55 648.5,353.55 H646.3 M640.2,349.5 H647.8" fill="none" stroke="#3c3c3c" stroke-width="1.2"/>
<rect x="745" y="337.0" width="1" height="24" fill="#e2e2e2"/>
<rect x="764" y="337.0" width="1" height="24" fill="#e2e2e2"/>
<rect x="784" y="337.0" width="1" height="24" fill="#e2e2e2"/>
<rect x="804" y="337.0" width="1" height="24" fill="#e2e2e2"/>
<rect x="823" y="337.0" width="1" height="24" fill="#e2e2e2"/>
<rect x="843" y="337.0" width="1" height="24" fill="#e2e2e2"/>
<rect x="863" y="337.0" width="1" height="24" fill="#e2e2e2"/>
<rect x="882" y="337.0" width="1" height="24" fill="#e2e2e2"/>
<rect x="902" y="337.0" width="1" height="24" fill="#e2e2e2"/>
<rect x="922" y="337.0" width="1" height="24" fill="#e2e2e2"/>
<rect x="942" y="337.0" width="1" height="24" fill="#e2e2e2"/>
<rect x="961" y="337.0" width="1" height="24" fill="#e2e2e2"/>
<rect x="981" y="337.0" width="1" height="24" fill="#e2e2e2"/>
<rect x="1001" y="337.0" width="1" height="24" fill="#e2e2e2"/>
<rect x="1020" y="337.0" width="1" height="24" fill="#e2e2e2"/>
<rect x="1040" y="337.0" width="1" height="24" fill="#e2e2e2"/>
<rect x="1060" y="337.0" width="1" height="24" fill="#e2e2e2"/>
<rect x="1080" y="337.0" width="1" height="24" fill="#e2e2e2"/>
<rect x="1099" y="337.0" width="1" height="24" fill="#e2e2e2"/>
<rect x="1119" y="337.0" width="1" height="24" fill="#e2e2e2"/>
<rect x="1139" y="337.0" width="1" height="24" fill="#e2e2e2"/>
<rect x="1158" y="337.0" width="1" height="24" fill="#e2e2e2"/>
<rect x="1178" y="337.0" width="1" height="24" fill="#e2e2e2"/>
<rect x="1198" y="337.0" width="1" height="24" fill="#e2e2e2"/>
<rect x="1217" y="337.0" width="1" height="24" fill="#e2e2e2"/>
<g transform="translate(1236.9,348.0)" fill="none" stroke="#a3abb6"><circle r="5.3" stroke-width="1.5"/><circle r="2.6" stroke-width="1.3"/><g stroke-width="1.9"><line x1="0" y1="-5.4" x2="0" y2="-7.7" transform="rotate(22.5)"/><line x1="0" y1="-5.4" x2="0" y2="-7.7" transform="rotate(67.5)"/><line x1="0" y1="-5.4" x2="0" y2="-7.7" transform="rotate(112.5)"/><line x1="0" y1="-5.4" x2="0" y2="-7.7" transform="rotate(157.5)"/><line x1="0" y1="-5.4" x2="0" y2="-7.7" transform="rotate(202.5)"/><line x1="0" y1="-5.4" x2="0" y2="-7.7" transform="rotate(247.5)"/><line x1="0" y1="-5.4" x2="0" y2="-7.7" transform="rotate(292.5)"/><line x1="0" y1="-5.4" x2="0" y2="-7.7" transform="rotate(337.5)"/></g></g>
<path d="M641.8,379.45 H639.5 Q636.4,379.45 636.4,383.5 Q636.4,387.55 639.5,387.55 H641.8 M646.3,379.45 H648.5 Q651.6,379.45 651.6,383.5 Q651.6,387.55 648.5,387.55 H646.3 M640.2,383.5 H647.8" fill="none" stroke="#3c3c3c" stroke-width="1.2"/>
<rect x="745" y="371.0" width="1" height="24" fill="#e2e2e2"/>
<rect x="764" y="371.0" width="1" height="24" fill="#e2e2e2"/>
<rect x="784" y="371.0" width="1" height="24" fill="#e2e2e2"/>
<rect x="804" y="371.0" width="1" height="24" fill="#e2e2e2"/>
<rect x="823" y="371.0" width="1" height="24" fill="#e2e2e2"/>
<rect x="843" y="371.0" width="1" height="24" fill="#e2e2e2"/>
<rect x="863" y="371.0" width="1" height="24" fill="#e2e2e2"/>
<rect x="882" y="371.0" width="1" height="24" fill="#e2e2e2"/>
<rect x="902" y="371.0" width="1" height="24" fill="#e2e2e2"/>
<rect x="922" y="371.0" width="1" height="24" fill="#e2e2e2"/>
<rect x="942" y="371.0" width="1" height="24" fill="#e2e2e2"/>
<rect x="961" y="371.0" width="1" height="24" fill="#e2e2e2"/>
<rect x="981" y="371.0" width="1" height="24" fill="#e2e2e2"/>
<rect x="1001" y="371.0" width="1" height="24" fill="#e2e2e2"/>
<rect x="1020" y="371.0" width="1" height="24" fill="#e2e2e2"/>
<rect x="1040" y="371.0" width="1" height="24" fill="#e2e2e2"/>
<rect x="1060" y="371.0" width="1" height="24" fill="#e2e2e2"/>
<rect x="1080" y="371.0" width="1" height="24" fill="#e2e2e2"/>
<rect x="1099" y="371.0" width="1" height="24" fill="#e2e2e2"/>
<rect x="1119" y="371.0" width="1" height="24" fill="#e2e2e2"/>
<rect x="1139" y="371.0" width="1" height="24" fill="#e2e2e2"/>
<rect x="1158" y="371.0" width="1" height="24" fill="#e2e2e2"/>
<rect x="1178" y="371.0" width="1" height="24" fill="#e2e2e2"/>
<rect x="1198" y="371.0" width="1" height="24" fill="#e2e2e2"/>
<rect x="1217" y="371.0" width="1" height="24" fill="#e2e2e2"/>
<g transform="translate(1236.9,382.0)" fill="none" stroke="#a3abb6"><circle r="5.3" stroke-width="1.5"/><circle r="2.6" stroke-width="1.3"/><g stroke-width="1.9"><line x1="0" y1="-5.4" x2="0" y2="-7.7" transform="rotate(22.5)"/><line x1="0" y1="-5.4" x2="0" y2="-7.7" transform="rotate(67.5)"/><line x1="0" y1="-5.4" x2="0" y2="-7.7" transform="rotate(112.5)"/><line x1="0" y1="-5.4" x2="0" y2="-7.7" transform="rotate(157.5)"/><line x1="0" y1="-5.4" x2="0" y2="-7.7" transform="rotate(202.5)"/><line x1="0" y1="-5.4" x2="0" y2="-7.7" transform="rotate(247.5)"/><line x1="0" y1="-5.4" x2="0" y2="-7.7" transform="rotate(292.5)"/><line x1="0" y1="-5.4" x2="0" y2="-7.7" transform="rotate(337.5)"/></g></g>
<path d="M641.8,413.45 H639.5 Q636.4,413.45 636.4,417.5 Q636.4,421.55 639.5,421.55 H641.8 M646.3,413.45 H648.5 Q651.6,413.45 651.6,417.5 Q651.6,421.55 648.5,421.55 H646.3 M640.2,417.5 H647.8" fill="none" stroke="#3c3c3c" stroke-width="1.2"/>
<rect x="745" y="405.0" width="1" height="24" fill="#e2e2e2"/>
<rect x="764" y="405.0" width="1" height="24" fill="#e2e2e2"/>
<rect x="784" y="405.0" width="1" height="24" fill="#e2e2e2"/>
<rect x="804" y="405.0" width="1" height="24" fill="#e2e2e2"/>
<rect x="823" y="405.0" width="1" height="24" fill="#e2e2e2"/>
<rect x="843" y="405.0" width="1" height="24" fill="#e2e2e2"/>
<rect x="863" y="405.0" width="1" height="24" fill="#e2e2e2"/>
<rect x="882" y="405.0" width="1" height="24" fill="#e2e2e2"/>
<rect x="902" y="405.0" width="1" height="24" fill="#e2e2e2"/>
<rect x="922" y="405.0" width="1" height="24" fill="#e2e2e2"/>
<rect x="942" y="405.0" width="1" height="24" fill="#e2e2e2"/>
<rect x="961" y="405.0" width="1" height="24" fill="#e2e2e2"/>
<rect x="981" y="405.0" width="1" height="24" fill="#e2e2e2"/>
<rect x="1001" y="405.0" width="1" height="24" fill="#e2e2e2"/>
<rect x="1020" y="405.0" width="1" height="24" fill="#e2e2e2"/>
<rect x="1040" y="405.0" width="1" height="24" fill="#e2e2e2"/>
<rect x="1060" y="405.0" width="1" height="24" fill="#e2e2e2"/>
<rect x="1080" y="405.0" width="1" height="24" fill="#e2e2e2"/>
<rect x="1099" y="405.0" width="1" height="24" fill="#e2e2e2"/>
<rect x="1119" y="405.0" width="1" height="24" fill="#e2e2e2"/>
<rect x="1139" y="405.0" width="1" height="24" fill="#e2e2e2"/>
<rect x="1158" y="405.0" width="1" height="24" fill="#e2e2e2"/>
<rect x="1178" y="405.0" width="1" height="24" fill="#e2e2e2"/>
<rect x="1198" y="405.0" width="1" height="24" fill="#e2e2e2"/>
<rect x="1217" y="405.0" width="1" height="24" fill="#e2e2e2"/>
<g transform="translate(1236.9,416.0)" fill="none" stroke="#a3abb6"><circle r="5.3" stroke-width="1.5"/><circle r="2.6" stroke-width="1.3"/><g stroke-width="1.9"><line x1="0" y1="-5.4" x2="0" y2="-7.7" transform="rotate(22.5)"/><line x1="0" y1="-5.4" x2="0" y2="-7.7" transform="rotate(67.5)"/><line x1="0" y1="-5.4" x2="0" y2="-7.7" transform="rotate(112.5)"/><line x1="0" y1="-5.4" x2="0" y2="-7.7" transform="rotate(157.5)"/><line x1="0" y1="-5.4" x2="0" y2="-7.7" transform="rotate(202.5)"/><line x1="0" y1="-5.4" x2="0" y2="-7.7" transform="rotate(247.5)"/><line x1="0" y1="-5.4" x2="0" y2="-7.7" transform="rotate(292.5)"/><line x1="0" y1="-5.4" x2="0" y2="-7.7" transform="rotate(337.5)"/></g></g>
</svg>
<div class="t" style="left:600px;top:175.5px;width:134.5px;text-align:right;color:#111">Weekly Plan</div>
<div class="t" style="left:731px;top:175.6px;width:30px;text-align:center;color:#333">0</div>
<div class="t" style="left:750px;top:175.6px;width:30px;text-align:center;color:#333">1</div>
<div class="t" style="left:770px;top:175.6px;width:30px;text-align:center;color:#333">2</div>
<div class="t" style="left:790px;top:175.6px;width:30px;text-align:center;color:#333">3</div>
<div class="t" style="left:809px;top:175.6px;width:30px;text-align:center;color:#333">4</div>
<div class="t" style="left:829px;top:175.6px;width:30px;text-align:center;color:#333">5</div>
<div class="t" style="left:849px;top:175.6px;width:30px;text-align:center;color:#333">6</div>
<div class="t" style="left:868px;top:175.6px;width:30px;text-align:center;color:#333">7</div>
<div class="t" style="left:888px;top:175.6px;width:30px;text-align:center;color:#333">8</div>
<div class="t" style="left:908px;top:175.6px;width:30px;text-align:center;color:#333">9</div>
<div class="t" style="left:928px;top:175.6px;width:30px;text-align:center;color:#333">10</div>
<div class="t" style="left:947px;top:175.6px;width:30px;text-align:center;color:#333">11</div>
<div class="t" style="left:967px;top:175.6px;width:30px;text-align:center;color:#333">12</div>
<div class="t" style="left:987px;top:175.6px;width:30px;text-align:center;color:#333">13</div>
<div class="t" style="left:1006px;top:175.6px;width:30px;text-align:center;color:#333">14</div>
<div class="t" style="left:1026px;top:175.6px;width:30px;text-align:center;color:#333">15</div>
<div class="t" style="left:1046px;top:175.6px;width:30px;text-align:center;color:#333">16</div>
<div class="t" style="left:1066px;top:175.6px;width:30px;text-align:center;color:#333">17</div>
<div class="t" style="left:1085px;top:175.6px;width:30px;text-align:center;color:#333">18</div>
<div class="t" style="left:1105px;top:175.6px;width:30px;text-align:center;color:#333">19</div>
<div class="t" style="left:1125px;top:175.6px;width:30px;text-align:center;color:#333">20</div>
<div class="t" style="left:1144px;top:175.6px;width:30px;text-align:center;color:#333">21</div>
<div class="t" style="left:1164px;top:175.6px;width:30px;text-align:center;color:#333">22</div>
<div class="t" style="left:1184px;top:175.6px;width:30px;text-align:center;color:#333">23</div>
<div class="t" style="left:1203px;top:175.6px;width:30px;text-align:center;color:#333">24</div>
<div class="t" style="left:600px;top:206.45px;width:134.5px;text-align:right;color:#111">Sunday</div>
<div class="t" style="left:600px;top:240.45px;width:134.5px;text-align:right;color:#111">Monday</div>
<div class="t" style="left:600px;top:274.45px;width:134.5px;text-align:right;color:#111">Tuesday</div>
<div class="t" style="left:600px;top:308.45px;width:134.5px;text-align:right;color:#111">Wednesday</div>
<div class="t" style="left:600px;top:342.45px;width:134.5px;text-align:right;color:#111">Thursday</div>
<div class="t" style="left:600px;top:376.45px;width:134.5px;text-align:right;color:#111">Friday</div>
<div class="t" style="left:600px;top:410.45px;width:134.5px;text-align:right;color:#111">Saturday</div>
<div class="a" style="left:1105px;top:753px;width:73px;height:25px;background:#00b4e4"></div>
<div class="a" style="left:1103px;top:750px;width:78px;height:31px;border:5px solid #ec1c24"></div>
<div class="a" style="left:1185px;top:753px;width:70px;height:24px;background:#00b4e4;border-radius:3px"></div>
<div class="t" style="left:1106px;top:758.3px;width:73px;text-align:center;color:#fff">Copy To</div>
<div class="t" style="left:1185px;top:758.3px;width:70px;text-align:center;color:#fff">Save</div>


</body></html>
